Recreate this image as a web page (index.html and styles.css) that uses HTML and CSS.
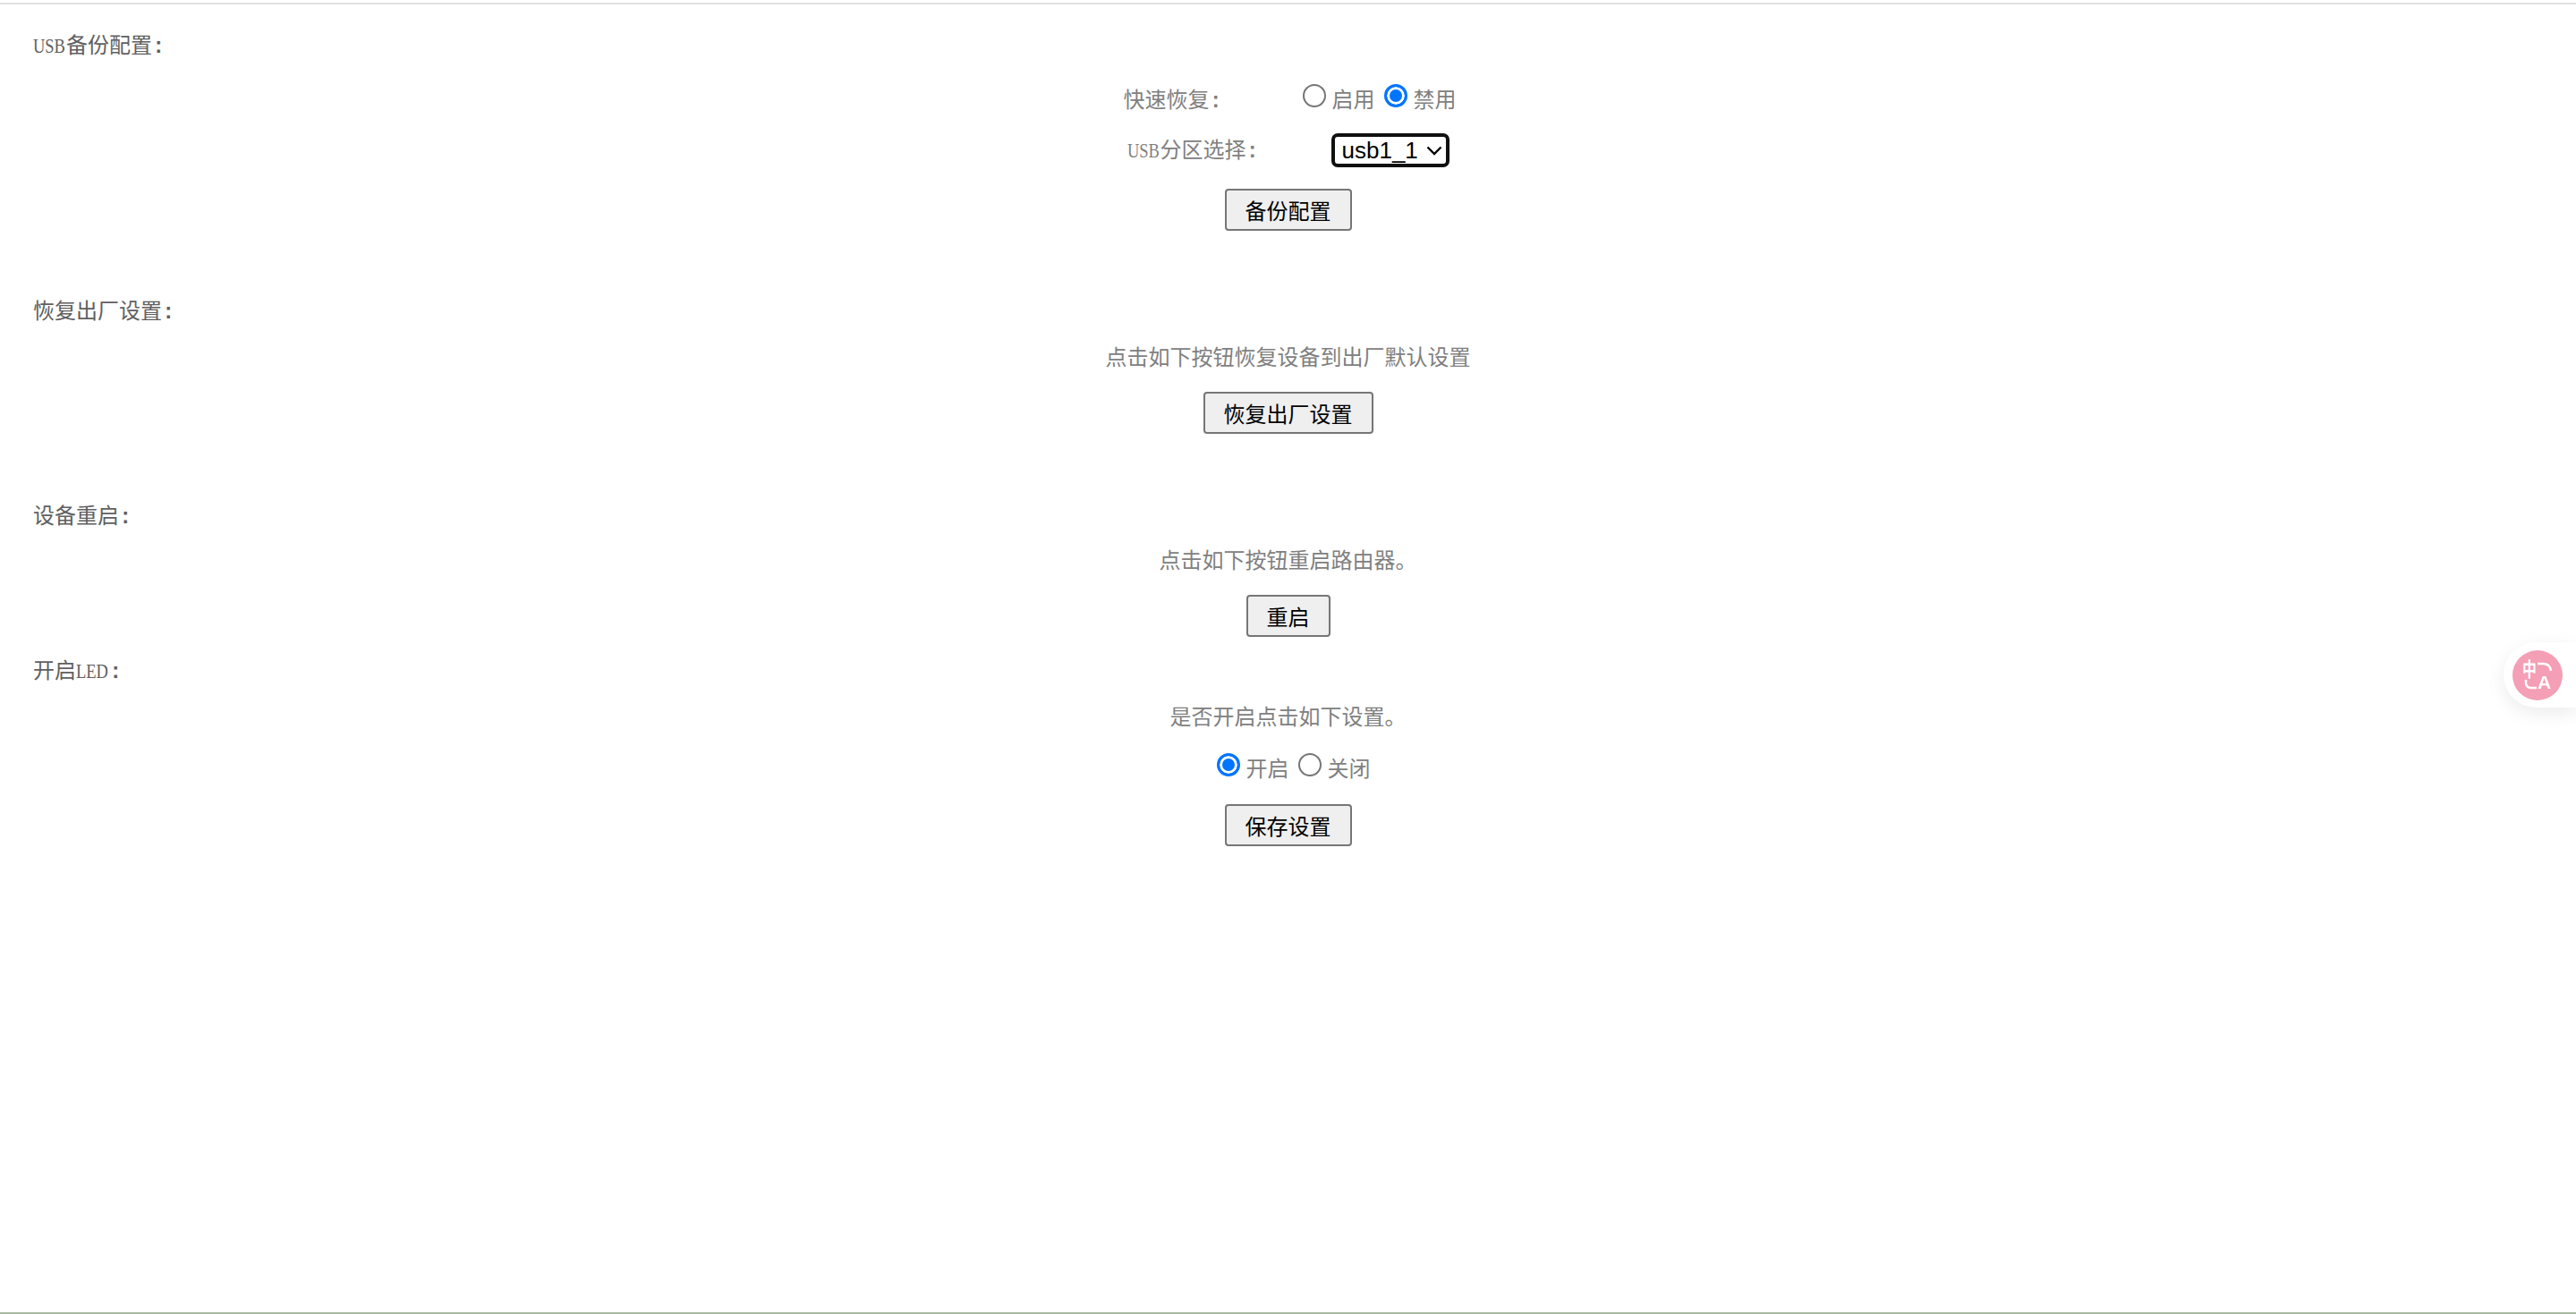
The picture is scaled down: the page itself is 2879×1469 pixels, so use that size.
FILE: index.html
```html
<!DOCTYPE html>
<html lang="zh-CN">
<head>
    <meta charset="UTF-8">
    <title>系统设置</title>
    <link rel="stylesheet" href="styles.css">
</head>
<body>
    <div class="top-line"></div>
    <div class="content">
        <div class="section section-usb">
            <div class="title"><span class="latin">USB</span>备份配置<span class="colon">:</span></div>
            <div class="row row-fast">
                <span class="label label-fast">快速恢复<span class="colon">:</span></span>
                <input type="radio" name="fast" class="radio">
                <span class="radio-text">启用</span>
                <input type="radio" name="fast" class="radio radio-next" checked>
                <span class="radio-text">禁用</span>
            </div>
            <div class="row row-part">
                <span class="label label-part"><span class="latin">USB</span>分区选择<span class="colon">:</span></span>
                <select class="part-select">
                    <option>usb1_1</option>
                </select>
            </div>
            <div class="row row-btn-usb"><button class="btn btn-four">备份配置</button></div>
        </div>

        <div class="section section-reset">
            <div class="title">恢复出厂设置<span class="colon">:</span></div>
            <div class="row row-tip-reset">点击如下按钮恢复设备到出厂默认设置</div>
            <div class="row row-btn-reset"><button class="btn btn-six">恢复出厂设置</button></div>
        </div>

        <div class="section section-reboot">
            <div class="title">设备重启<span class="colon">:</span></div>
            <div class="row row-tip-reboot">点击如下按钮重启路由器。</div>
            <div class="row row-btn-reboot"><button class="btn btn-two">重启</button></div>
        </div>

        <div class="section section-led">
            <div class="title">开启<span class="latin">LED</span><span class="colon">:</span></div>
            <div class="row row-tip-led">是否开启点击如下设置。</div>
            <div class="row row-led">
                <input type="radio" name="led" class="radio" checked>
                <span class="radio-text">开启</span>
                <input type="radio" name="led" class="radio radio-next">
                <span class="radio-text">关闭</span>
            </div>
            <div class="row row-btn-led"><button class="btn btn-four">保存设置</button></div>
        </div>
    </div>
    <div class="bottom-line"></div>

    <!-- 翻译浮标 -->
    <div class="translate-tab">
        <div class="translate-icon">
            <span class="icon-zh">中</span>
            <span class="icon-a">A</span>
            <svg class="icon-arcs" viewBox="0 0 56 56" width="56" height="56" fill="none" stroke="#fff" stroke-width="2.5">
                <path d="M28 15h6q8 0 9 8"/>
                <path d="M15 33v3q0 6 6 6h6"/>
            </svg>
        </div>
    </div>
</body>
</html>
```

FILE: styles.css
```css
html, body {
    margin: 0;
    height: 100%;
}
body {
    display: flex;
    flex-direction: column;
    font-family: "Liberation Serif", "Noto Sans CJK SC", serif;
    font-size: 24px;
    line-height: 36px;
    color: #808080;
    background: #fff;
    overflow: hidden;
}
.top-line {
    height: 2px;
    margin-top: 3px;
    background: #e0e0e0;
}
.bottom-line {
    height: 2px;
    background: #a9b9a3;
}
.content {
    flex: 1;
}
.title {
    padding-left: 37px;
    color: #606060;
}
.latin {
    display: inline-block;
    width: 37px;
    line-height: 1;
    transform: scaleX(0.77);
    transform-origin: left;
}
.colon {
    font-family: "Liberation Mono", monospace;
    font-weight: bold;
    line-height: 1;
}
.row {
    display: flex;
    justify-content: center;
    align-items: center;
}

.section-usb { margin-top: 28px; }
.section-reset { margin-top: 72px; }
.section-reboot { margin-top: 74px; }
.section-led { margin-top: 20px; }

.row-fast { margin-top: 25px; padding-left: 4px; }
.row-part { margin-top: 19px; }
.row-btn-usb { margin-top: 24px; }
.row-tip-reset { margin-top: 16px; }
.row-btn-reset { margin-top: 20px; }
.row-tip-reboot { margin-top: 14px; }
.row-btn-reboot { margin-top: 20px; }
.row-tip-led { margin-top: 16px; }
.row-led { margin-top: 22px; padding-left: 12px; }
.row-btn-led { margin-top: 21px; }

.label-fast { width: 200px; }
.label-part { width: 228px; }

.radio {
    appearance: none;
    box-sizing: border-box;
    width: 26px;
    height: 26px;
    margin: -10px 7px 0 0;
    border: 2px solid #767676;
    border-radius: 50%;
    background: #fff;
}
.radio:checked {
    border: 3px solid #0075ff;
    background: #0075ff;
    box-shadow: inset 0 0 0 3px #fff;
}
.radio-next {
    margin-left: 10px;
}
.part-select {
    width: 132px;
    height: 38px;
    padding: 0 0 0 8px;
    border: 4px solid #101010;
    border-radius: 7px;
    appearance: none;
    background: #fff url("data:image/svg+xml,%3Csvg xmlns='http://www.w3.org/2000/svg' width='18' height='11'%3E%3Cpath d='M1.5 1.5l7.5 7.5 7.5-7.5' fill='none' stroke='%23000' stroke-width='2.4'/%3E%3C/svg%3E") no-repeat right 4px center;
    color: #000;
    font-family: "Liberation Sans", sans-serif;
    font-size: 26px;
}
.btn {
    height: 47px;
    padding: 0;
    border: 2px solid #767676;
    border-radius: 4px;
    background: #efefef;
    color: #000;
    font-family: "Liberation Sans", "Noto Sans CJK SC", sans-serif;
    font-size: 24px;
}
.btn-two { width: 94px; }
.btn-four { width: 142px; }
.btn-six { width: 190px; }

.translate-tab {
    position: fixed;
    top: 718px;
    right: 0;
    width: 81px;
    height: 73px;
    display: flex;
    align-items: center;
    background: #fff;
    border-radius: 37px 0 0 37px;
    box-shadow: 0 6px 20px rgba(0, 0, 0, 0.08);
}
.translate-icon {
    position: relative;
    width: 56px;
    height: 56px;
    margin-left: 10px;
    border-radius: 50%;
    background: #f49fb6;
    color: #fff;
    font-family: "Liberation Sans", "Noto Sans CJK SC", sans-serif;
    font-weight: bold;
}
.icon-zh {
    position: absolute;
    left: 11px;
    top: 10px;
    font-size: 22px;
    line-height: 24px;
    transform: scaleX(0.72);
    transform-origin: left;
}
.icon-a {
    position: absolute;
    left: 28px;
    top: 24px;
    font-size: 21px;
    line-height: 24px;
}
.icon-arcs {
    position: absolute;
    left: 0;
    top: 0;
}
```
